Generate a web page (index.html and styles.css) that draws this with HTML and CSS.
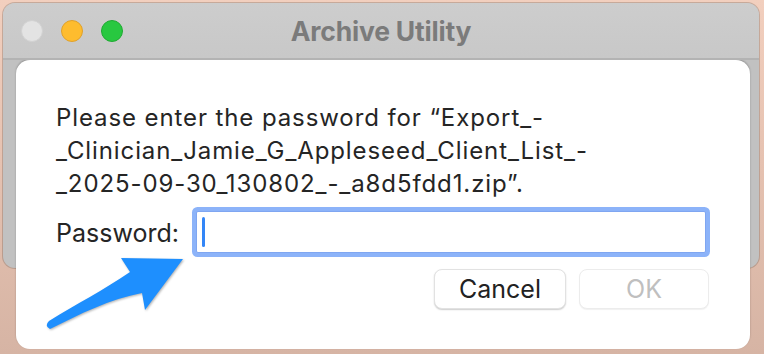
FILE: index.html
```html
<!DOCTYPE html>
<html>
<head>
<meta charset="utf-8">
<link rel="stylesheet" href="styles.css">
</head>
<body>
<div class="window">
  <div class="titlebar">
    <div class="lights">
      <span class="light close"></span>
      <span class="light min"></span>
      <span class="light max"></span>
    </div>
    <div class="title">Archive Utility</div>
  </div>
  <div class="sheet">
    <p class="message">Please enter the password for “Export_-<br>_Clinician_Jamie_G_Appleseed_Client_List_-<br>_2025-09-30_130802_-_a8d5fdd1.zip”.</p>
    <div class="row">
      <label class="label">Password:</label>
      <div class="field"><span class="caret"></span></div>
    </div>
    <div class="buttons">
      <button class="btn">Cancel</button>
      <button class="btn disabled">OK</button>
    </div>
  </div>
</div>
<svg class="arrow" viewBox="40 250 150 85" width="150" height="85">
  <path d="M183,259 L121,258 L130,272 C104,290 76,304 49,321 Q44,326 50,329 C80,314 110,299 142,293 L145,310 Z" fill="#1e8ffe"/>
</svg>
</body>
</html>
```
FILE: styles.css
```css
html, body {
  margin: 0;
  padding: 0;
}
body {
  width: 764px;
  height: 354px;
  overflow: hidden;
  background: linear-gradient(180deg, #f2cfbe 0%, #e6c2b1 45%, #d6b4a4 100%);
  font-family: "Inter", "Liberation Sans", sans-serif;
  position: relative;
}
.window {
  margin: 3px 0 0 3px;
  width: 756px;
  height: 265px;
  border-radius: 12px;
  background: #c1c1c1;
  box-shadow: 0 0 0 1px rgba(120, 100, 90, 0.35);
  display: flex;
  flex-direction: column;
}
.titlebar {
  height: 55px;
  flex: none;
  border-radius: 12px 12px 0 0;
  background: linear-gradient(180deg, #cdcdcd, #c8c8c8);
  border-bottom: 2px solid #b3b3b3;
  position: relative;
  display: flex;
  align-items: center;
}
.lights {
  display: flex;
  gap: 18px;
  padding-left: 18px;
  padding-top: 1px;
}
.light {
  width: 22px;
  height: 22px;
  border-radius: 50%;
  box-sizing: border-box;
}
.close { background: #e3e3e3; border: 1px solid #d2d2d2; }
.min { background: #febc2e; border: 1px solid #e0a12a; }
.max { background: #28c840; border: 1px solid #1faa32; }
.title {
  position: absolute;
  left: 0;
  right: 0;
  top: 0;
  bottom: 0;
  display: flex;
  align-items: center;
  justify-content: center;
  padding-right: 0;
  padding-top: 1px;
  font-weight: 700;
  font-size: 26.5px;
  color: #7b7b7b;
  letter-spacing: -0.2px;
}
.sheet {
  flex: none;
  margin: 0 9px 0 13px;
  height: 289px;
  background: #fff;
  border-radius: 14px;
  box-shadow: 0 -1px 2px rgba(0, 0, 0, 0.25);
  padding: 41px 40px 0 40px;
  box-sizing: border-box;
}
.message {
  margin: 0;
  font-size: 24px;
  line-height: 33px;
  color: #252525;
  white-space: nowrap;
  letter-spacing: 0.9px;
}
.row {
  display: flex;
  align-items: center;
  margin-top: 7px;
}
.label {
  width: 137px;
  font-size: 25px;
  color: #252525;
  padding-top: 1px;
}
.field {
  width: 512px;
  height: 42px;
  margin: 4px;
  box-sizing: border-box;
  border: 1px solid #7fa6f1;
  box-shadow: 0 0 0 4px #8cb3f9;
  border-radius: 2px;
  background: #fff;
  display: flex;
  align-items: center;
  padding-left: 5px;
}
.caret {
  width: 3px;
  height: 30px;
  border-radius: 2px;
  background: #3386f7;
}
.buttons {
  display: flex;
  justify-content: flex-end;
  gap: 13px;
  margin-top: 12px;
  padding-right: 1px;
}
.btn {
  width: 132px;
  height: 40px;
  border-radius: 8px;
  border: 1px solid #e2e2e2;
  background: #fff;
  box-shadow: 0 1px 1.5px rgba(0, 0, 0, 0.2);
  font-family: "Inter", "Liberation Sans", sans-serif;
  font-size: 25px;
  color: #222;
  padding: 0;
}
.btn.disabled {
  color: #bfbfbf;
  border-color: #ececec;
  box-shadow: 0 1px 1px rgba(0, 0, 0, 0.06);
  width: 130px;
}
.arrow {
  position: absolute;
  left: 40px;
  top: 250px;
  filter: drop-shadow(1px 1px 1px rgba(0, 0, 0, 0.3));
}
```
